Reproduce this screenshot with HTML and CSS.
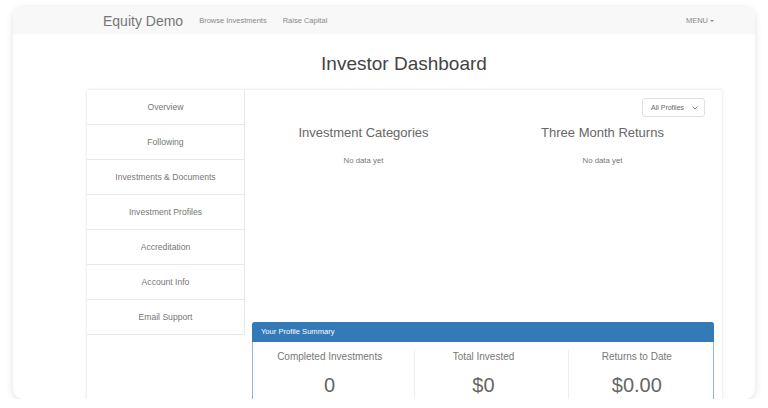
FILE: index.html
```html
<!DOCTYPE html>
<html lang="en">
<head>
    <meta charset="UTF-8" />
    <meta name="viewport" content="width=device-width, initial-scale=1.0" />
    <title>Investor Dashboard</title>
    <link rel="stylesheet" href="styles.css">
</head>
<body>
    <div class="frame">
        <nav class="navbar">
            <div class="nav-inner">
                <a class="brand" href="#">Equity Demo</a>
                <a class="nav-link" href="#">Browse Investments</a>
                <a class="nav-link" href="#">Raise Capital</a>
                <span class="menu">MENU <span class="caret"></span></span>
            </div>
        </nav>

        <h1>Investor Dashboard</h1>

        <div class="card">
            <ul class="sidebar">
                <li>Overview</li>
                <li>Following</li>
                <li>Investments &amp; Documents</li>
                <li>Investment Profiles</li>
                <li>Accreditation</li>
                <li>Account Info</li>
                <li>Email Support</li>
            </ul>

            <div class="content">
                <div class="filter-row">
                    <div class="select">
                        <span>All Profiles</span>
                        <svg width="6" height="4" viewBox="0 0 6 4"><polyline points="0.5,0.5 3,3 5.5,0.5" fill="none" stroke="#777" stroke-width="0.9"/></svg>
                    </div>
                </div>

                <div class="charts">
                    <div class="chart">
                        <h2>Investment Categories</h2>
                        <p class="empty">No data yet</p>
                    </div>
                    <div class="chart">
                        <h2>Three Month Returns</h2>
                        <p class="empty">No data yet</p>
                    </div>
                </div>

                <div class="summary">
                    <div class="summary-head">Your Profile Summary</div>
                    <div class="summary-body">
                        <div class="stat">
                            <div class="stat-inner">
                                <div class="stat-label">Completed Investments</div>
                                <div class="stat-value">0</div>
                            </div>
                        </div>
                        <div class="stat">
                            <div class="stat-inner divided">
                                <div class="stat-label">Total Invested</div>
                                <div class="stat-value">$0</div>
                            </div>
                        </div>
                        <div class="stat">
                            <div class="stat-inner divided">
                                <div class="stat-label">Returns to Date</div>
                                <div class="stat-value">$0.00</div>
                            </div>
                        </div>
                    </div>
                </div>
            </div>
        </div>
    </div>
</body>
</html>
```

FILE: styles.css
```css
body {
    margin: 0;
    background: #fff;
    font-family: "Liberation Sans", Arial, sans-serif;
    color: #555;
}
.frame {
    margin: 7px 13px 0;
    height: 392px;
    border-radius: 10px;
    background: #fff;
    box-shadow: 0 1px 7px rgba(0,0,0,0.13);
    overflow: hidden;
}
.navbar {
    height: 27px;
    background: #f8f8f8;
}
.nav-inner {
    margin-left: 74px;
    width: 635px;
    height: 100%;
    display: flex;
    align-items: center;
}
.brand {
    padding-left: 16px;
    font-size: 14px;
    color: #777;
    text-decoration: none;
}
.nav-link {
    margin-left: 16px;
    font-size: 7.5px;
    color: #888;
    text-decoration: none;
}
.menu {
    margin-left: auto;
    margin-right: 8px;
    font-size: 7.5px;
    color: #888;
    display: flex;
    align-items: center;
    gap: 2px;
}
.caret {
    width: 0;
    height: 0;
    border-left: 2.5px solid transparent;
    border-right: 2.5px solid transparent;
    border-top: 2.5px solid #888;
}
h1 {
    margin: 18px 0 14px;
    padding-left: 40px;
    text-align: center;
    font-size: 19px;
    line-height: 24px;
    font-weight: normal;
    color: #444;
}
.card {
    margin-left: 74px;
    width: 635px;
    height: 330px;
    display: flex;
    box-shadow: 0 0 3px rgba(0,0,0,0.15);
}
.sidebar {
    list-style: none;
    margin: 0;
    padding: 0;
    width: 158px;
}
.sidebar li {
    height: 34px;
    display: flex;
    align-items: center;
    justify-content: center;
    border-bottom: 1px solid #e8e8e8;
    border-right: 1px solid #e8e8e8;
    font-size: 8.6px;
    color: #777;
}
.content {
    flex: 1;
    padding-top: 8px;
}
.filter-row {
    display: flex;
    justify-content: flex-end;
    padding-right: 17px;
}
.select {
    width: 63px;
    height: 19px;
    box-sizing: border-box;
    border: 1px solid #e0e0e0;
    border-radius: 3px;
    display: flex;
    align-items: center;
    justify-content: space-between;
    padding: 0 6px 0 8px;
    font-size: 7px;
    color: #666;
}
.charts {
    height: 205px;
    display: grid;
    grid-template-columns: 1fr 1fr;
    margin-left: -1px;
}
.chart {
    text-align: center;
}
.chart h2 {
    margin: 8px 0 0;
    font-size: 13px;
    line-height: 16px;
    font-weight: normal;
    color: #666;
}
.empty {
    margin: 15px 0 0;
    font-size: 7.8px;
    line-height: 10px;
    color: #777;
}
.summary {
    margin: 0 8px 0 7px;
    border: 1px solid #8db4da;
    border-top: none;
    border-radius: 3px 3px 0 0;
    height: 120px;
}
.summary-head {
    height: 20px;
    margin: 0 -1px;
    background: #337ab7;
    border-radius: 3px 3px 0 0;
    color: #fff;
    font-size: 7.6px;
    line-height: 20px;
    padding-left: 9px;
}
.summary-body {
    display: grid;
    grid-template-columns: 1fr 1fr 1fr;
    padding-top: 8px;
}
.stat {
    padding: 0 8px;
}
.stat-inner {
    text-align: center;
    height: 80px;
}
.stat-inner.divided {
    border-left: 1px solid #eee;
}
.stat-label {
    font-size: 10px;
    line-height: 14px;
    color: #777;
}
.stat-value {
    margin-top: 9px;
    font-size: 20px;
    line-height: 24px;
    color: #666;
}
```
